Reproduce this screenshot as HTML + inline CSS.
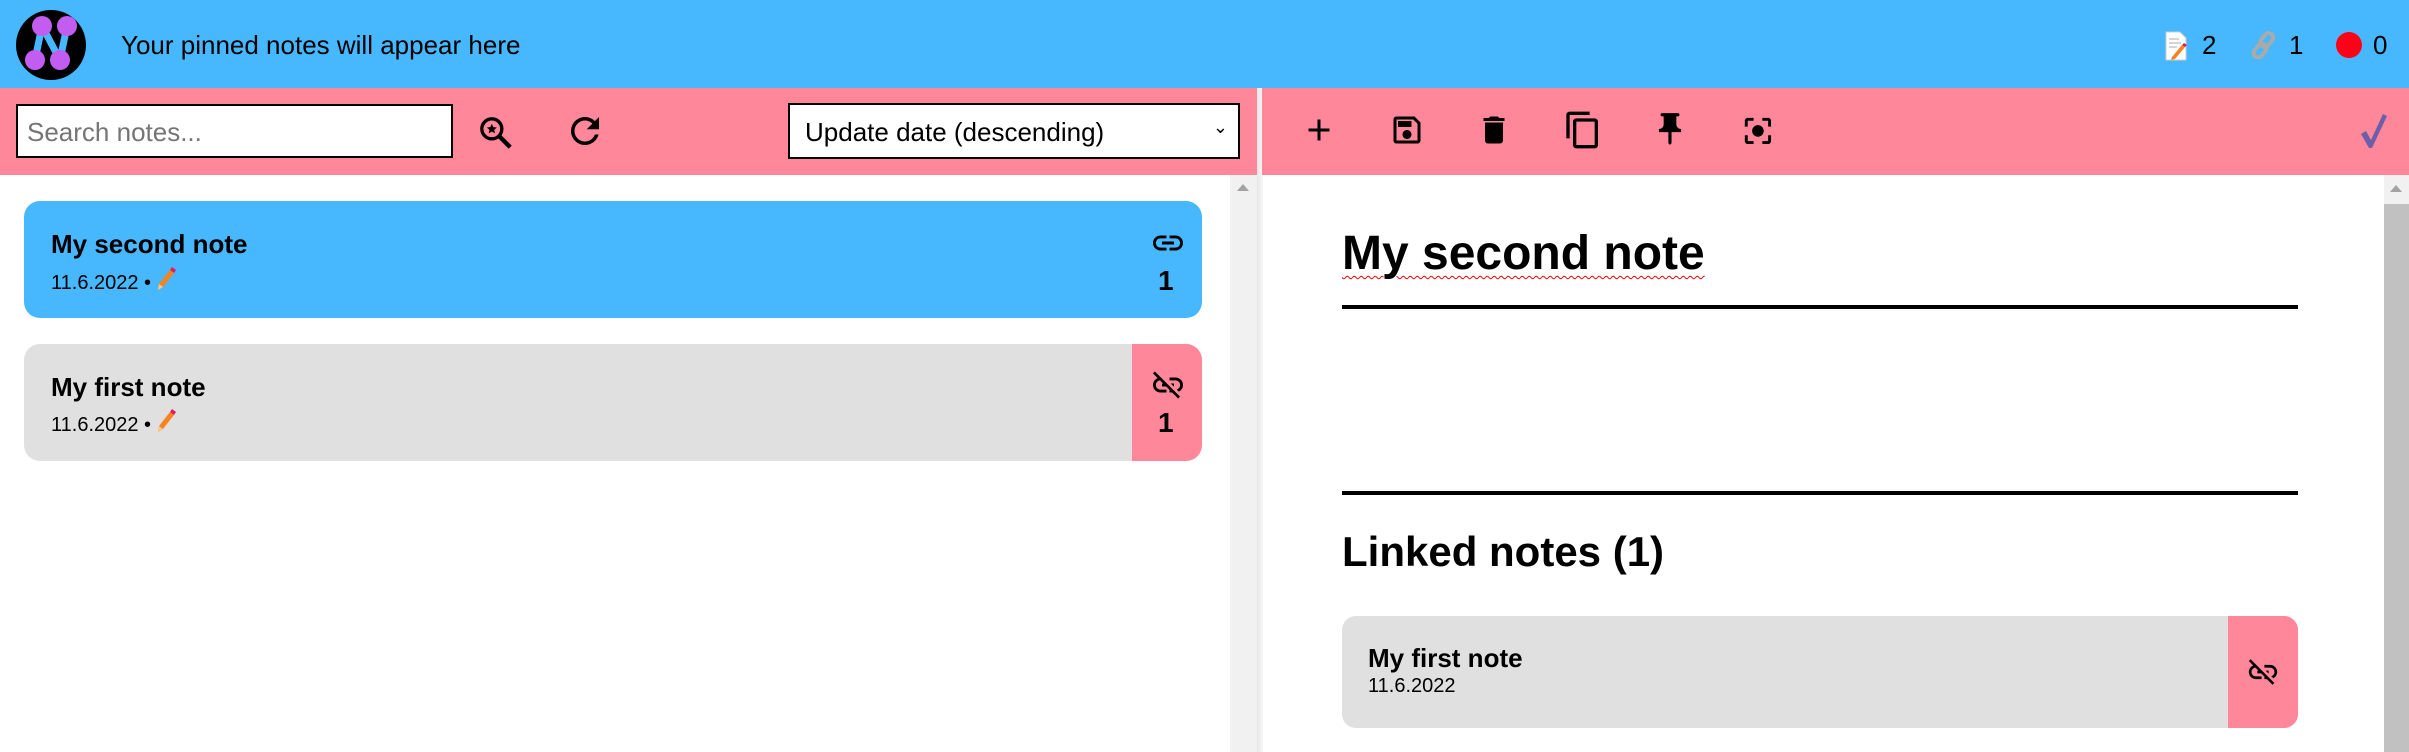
<!DOCTYPE html>
<html><head><meta charset="utf-8"><style>
*{margin:0;padding:0;box-sizing:border-box}
body{width:2409px;height:752px;overflow:hidden;background:#fff;font-family:"Liberation Sans",sans-serif;position:relative;color:#000}
.abs{position:absolute}
svg{display:block}
.pen{display:inline-block;vertical-align:-3px;margin-left:4px}
</style></head><body>
<div class="abs" style="left:0;top:0;width:2409px;height:88px;background:#48b8fe"></div>
<svg class="abs" style="left:14px;top:8px" width="74" height="74" viewBox="0 0 74 74">
<circle cx="37" cy="37" r="35" fill="#000"/>
<g stroke="#48b8fe" stroke-width="7"><line x1="28" y1="18" x2="21" y2="52"/><line x1="28" y1="18" x2="46" y2="52"/><line x1="53" y1="18" x2="46" y2="52"/></g>
<g fill="#c35cf0"><circle cx="28" cy="18" r="10"/><circle cx="53" cy="18" r="10"/><circle cx="21" cy="52" r="10"/><circle cx="46" cy="52" r="10"/></g>
</svg>
<div class="abs" style="left:121px;top:30px;font-size:26px">Your pinned notes will appear here</div>
<svg class="abs" style="left:2164px;top:31px" width="24" height="30" viewBox="0 0 24 30"><path d="M2 1h14l6 6v22H2z" fill="#fff" stroke="#ccc"/><path d="M5 8h10M5 12h12M5 16h8" stroke="#aaa"/><path d="M8 26l10-12 3 2-10 12-4 1z" fill="#f6831f"/><path d="M18 14l2-2 3 2-2 2z" fill="#e5195e"/></svg>
<div class="abs" style="left:2202px;top:30px;font-size:26px">2</div>
<svg class="abs" style="left:2250px;top:30px" width="28" height="30" viewBox="0 0 28 30"><g fill="none" stroke="#aaa" stroke-width="4"><rect x="12" y="2" width="9" height="15" rx="4.5" transform="rotate(40 16 10)"/><rect x="6" y="13" width="9" height="15" rx="4.5" transform="rotate(40 10 20)"/></g></svg>
<div class="abs" style="left:2289px;top:30px;font-size:26px">1</div>
<div class="abs" style="left:2336px;top:32px;width:26px;height:26px;border-radius:50%;background:#ff0019"></div>
<div class="abs" style="left:2373px;top:30px;font-size:26px">0</div>

<div class="abs" style="left:0;top:88px;width:1262px;height:87px;background:#ff8799"></div>
<div class="abs" style="left:16px;top:104px;width:437px;height:54px;background:#fff;border:2px solid #000;font-size:26px;color:#757575;padding:11px 9px">Search notes...</div>
<svg class="abs" style="left:476px;top:113px" width="40" height="40" viewBox="0 0 24 24"><circle cx="9.5" cy="9.5" r="6" fill="none" stroke="#000" stroke-width="2"/><path d="M14 14l6.5 6.5" stroke="#000" stroke-width="2.6"/><path d="M9.5 6.5l.9 2 2.1.2-1.6 1.4.5 2.1-1.9-1.1-1.9 1.1.5-2.1-1.6-1.4 2.1-.2z" fill="#000"/></svg>
<svg class="abs" style="left:564px;top:110px" width="42" height="42" viewBox="0 0 24 24"><path d="M17.65 6.35C16.2 4.9 14.21 4 12 4c-4.42 0-7.99 3.58-7.99 8s3.57 8 7.99 8c3.73 0 6.84-2.55 7.73-6h-2.08c-.82 2.33-3.04 4-5.65 4-3.31 0-6-2.69-6-6s2.69-6 6-6c1.66 0 3.14.69 4.22 1.78L13 11h7V4l-2.35 2.35z"/></svg>
<div class="abs" style="left:788px;top:103px;width:452px;height:56px;background:#fff;border:2px solid #000;font-size:26px;padding:12px 15px">Update date (descending)<span style="position:absolute;right:10px;top:12px;font-size:18px">&#8964;</span></div>

<div class="abs" style="left:1230px;top:175px;width:27px;height:577px;background:#f1f1f1"></div>
<div class="abs" style="left:1237px;top:184px;width:0;height:0;border-left:6px solid transparent;border-right:6px solid transparent;border-bottom:7px solid #a3a3a3"></div>

<div class="abs" style="left:24px;top:201px;width:1178px;height:117px;background:#48b8fe;border-radius:16px"></div>
<div class="abs" style="left:51px;top:229px;font-size:26px;font-weight:bold">My second note</div>
<div class="abs" style="left:51px;top:266px;font-size:20px">11.6.2022 •<svg class="pen" width="22" height="26" viewBox="0 0 22 26"><path d="M3 24l1-6L15 4l4 3L8 21z" fill="#f6831f"/><path d="M15 4l2-3 4 3-2 3z" fill="#e5195e"/><path d="M3 24l1-6 4 3z" fill="#f3c88f"/></svg></div>
<svg class="abs" style="left:1150px;top:228px" width="36" height="30" viewBox="0 0 24 20"><path transform="translate(0,-2)" d="M3.9 12c0-1.71 1.39-3.1 3.1-3.1h4V7H7c-2.76 0-5 2.24-5 5s2.24 5 5 5h4v-1.9H7c-1.71 0-3.1-1.39-3.1-3.1zM8 13h8v-2H8v2zm9-6h-4v1.9h4c1.71 0 3.1 1.39 3.1 3.1s-1.39 3.1-3.1 3.1h-4V17h4c2.76 0 5-2.24 5-5s-2.24-5-5-5z"/></svg>
<div class="abs" style="left:1158px;top:265px;font-size:28px;font-weight:bold">1</div>

<div class="abs" style="left:24px;top:344px;width:1178px;height:117px;background:#e0e0e0;border-radius:16px;overflow:hidden"><div style="position:absolute;right:0;top:0;width:70px;height:117px;background:#ff8799"></div></div>
<div class="abs" style="left:51px;top:372px;font-size:26px;font-weight:bold">My first note</div>
<div class="abs" style="left:51px;top:408px;font-size:20px">11.6.2022 •<svg class="pen" width="22" height="26" viewBox="0 0 22 26"><path d="M3 24l1-6L15 4l4 3L8 21z" fill="#f6831f"/><path d="M15 4l2-3 4 3-2 3z" fill="#e5195e"/><path d="M3 24l1-6 4 3z" fill="#f3c88f"/></svg></div>
<svg class="abs" style="left:1150px;top:367px" width="36" height="36" viewBox="0 0 24 24"><path d="M17 7h-4v1.9h4c1.71 0 3.1 1.39 3.1 3.1 0 1.43-.98 2.63-2.31 2.98l1.46 1.46C20.88 15.61 22 13.95 22 12c0-2.76-2.24-5-5-5zm-1 4h-2.19l2 2H16zM2 4.27l3.11 3.11C3.29 8.12 2 9.91 2 12c0 2.76 2.24 5 5 5h4v-1.9H7c-1.71 0-3.1-1.39-3.1-3.1 0-1.59 1.21-2.9 2.76-3.07L8.73 11H8v2h2.73L13 15.27V17h1.73l4.01 4L20 19.74 3.27 3 2 4.27z"/></svg>
<div class="abs" style="left:1158px;top:407px;font-size:28px;font-weight:bold">1</div>

<div class="abs" style="left:1257px;top:88px;width:6px;height:664px;background:linear-gradient(90deg,#e6e6e6,#f8f8f8)"></div>
<div class="abs" style="left:1262px;top:88px;width:1147px;height:87px;background:#ff8799"></div>
<svg class="abs" style="left:1301px;top:112px" width="36" height="36" viewBox="0 0 24 24"><path d="M19 13h-6v6h-2v-6H5v-2h6V5h2v6h6v2z"/></svg>
<svg class="abs" style="left:1389px;top:112px" width="36" height="36" viewBox="0 0 24 24"><path d="M17 3H5c-1.11 0-2 .9-2 2v14c0 1.1.89 2 2 2h14c1.1 0 2-.9 2-2V7l-4-4zm2 16H5V5h11.17L19 7.83V19zm-7-7c-1.66 0-3 1.34-3 3s1.34 3 3 3 3-1.34 3-3-1.34-3-3-3zM6 6h9v4H6z"/></svg>
<svg class="abs" style="left:1476px;top:112px" width="36" height="36" viewBox="0 0 24 24"><path d="M6 19c0 1.1.9 2 2 2h8c1.1 0 2-.9 2-2V7H6v12zM19 4h-3.5l-1-1h-5l-1 1H5v2h14V4z"/></svg>
<svg class="abs" style="left:1563px;top:110px" width="40" height="40" viewBox="0 0 24 24"><path d="M16 1H4c-1.1 0-2 .9-2 2v14h2V3h12V1zm3 4H8c-1.1 0-2 .9-2 2v14c0 1.1.9 2 2 2h11c1.1 0 2-.9 2-2V7c0-1.1-.9-2-2-2zm0 16H8V7h11v14z"/></svg>
<svg class="abs" style="left:1651px;top:110px" width="38" height="38" viewBox="0 0 24 24"><path d="M16 9V4h1c.55 0 1-.45 1-1s-.45-1-1-1H7c-.55 0-1 .45-1 1s.45 1 1 1h1v5c0 1.66-1.34 3-3 3v2h5.97v7l1 1 1-1v-7H19v-2c-1.66 0-3-1.34-3-3z"/></svg>
<svg class="abs" style="left:1739px;top:112px" width="38" height="38" viewBox="0 0 24 24"><path d="M12 8c-2.21 0-4 1.79-4 4s1.79 4 4 4 4-1.79 4-4-1.79-4-4-4zm-7 7H3v4c0 1.1.9 2 2 2h4v-2H5v-4zM5 5h4V3H5c-1.1 0-2 .9-2 2v4h2V5zm14-2h-4v2h4v4h2V5c0-1.1-.9-2-2-2zm0 16h-4v2h4c1.1 0 2-.9 2-2v-4h-2v4z" transform="scale(.92) translate(1 1)"/></svg>
<svg class="abs" style="left:2358px;top:112px" width="30" height="38" viewBox="0 0 30 38"><path d="M3 22l5-3 5 9L25 2l4 2-15 32h-3z" fill="#6a5fa8"/></svg>

<div class="abs" style="left:2384px;top:175px;width:25px;height:577px;background:#f1f1f1"></div>
<div class="abs" style="left:2384px;top:204px;width:25px;height:548px;background:#c1c1c1"></div>
<div class="abs" style="left:2390px;top:185px;width:0;height:0;border-left:6px solid transparent;border-right:6px solid transparent;border-bottom:7px solid #a3a3a3"></div>

<div class="abs" style="left:1342px;top:226px;font-size:48px;font-weight:bold;text-decoration:underline wavy #e00;text-decoration-thickness:1px;text-underline-offset:6px">My second note</div>
<div class="abs" style="left:1342px;top:305px;width:956px;height:4px;background:#000"></div>
<div class="abs" style="left:1342px;top:491px;width:956px;height:4px;background:#000"></div>
<div class="abs" style="left:1342px;top:528px;font-size:42px;font-weight:bold">Linked notes (1)</div>
<div class="abs" style="left:1342px;top:616px;width:956px;height:112px;background:#e0e0e0;border-radius:14px;overflow:hidden"><div style="position:absolute;right:0;top:0;width:70px;height:112px;background:#ff8799"></div></div>
<div class="abs" style="left:1368px;top:643px;font-size:26px;font-weight:bold">My first note</div>
<div class="abs" style="left:1368px;top:675px;font-size:20px">11.6.2022</div>
<svg class="abs" style="left:2246px;top:655px" width="34" height="34" viewBox="0 0 24 24"><path d="M17 7h-4v1.9h4c1.71 0 3.1 1.39 3.1 3.1 0 1.43-.98 2.63-2.31 2.98l1.46 1.46C20.88 15.61 22 13.95 22 12c0-2.76-2.24-5-5-5zm-1 4h-2.19l2 2H16zM2 4.27l3.11 3.11C3.29 8.12 2 9.91 2 12c0 2.76 2.24 5 5 5h4v-1.9H7c-1.71 0-3.1-1.39-3.1-3.1 0-1.59 1.21-2.9 2.76-3.07L8.73 11H8v2h2.73L13 15.27V17h1.73l4.01 4L20 19.74 3.27 3 2 4.27z"/></svg>
</body></html>
